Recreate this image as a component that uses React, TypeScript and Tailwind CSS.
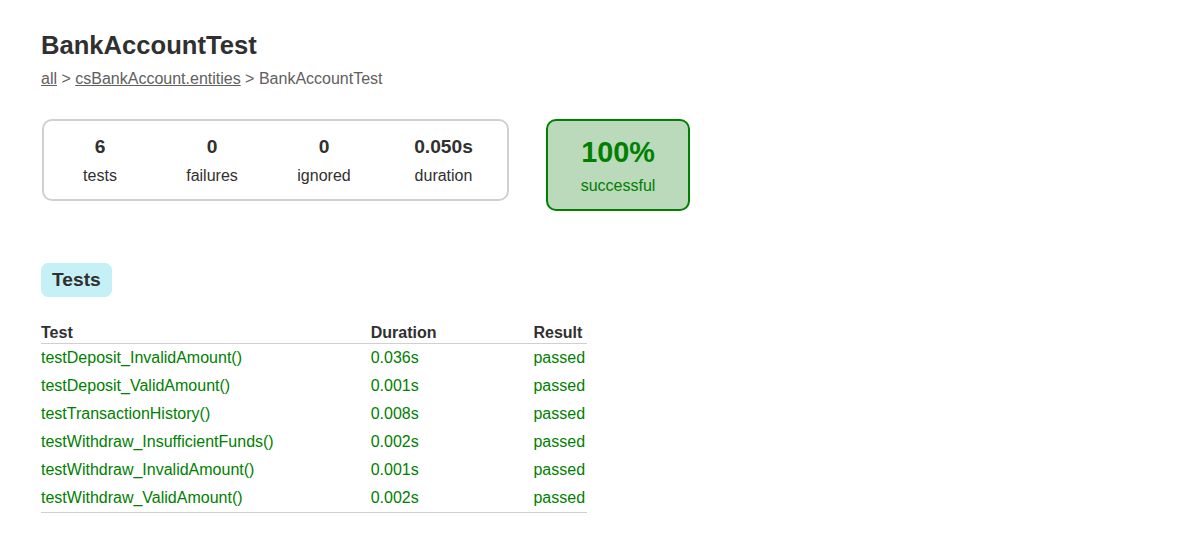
import React from "react";

const rows = [
  ["testDeposit_InvalidAmount()", "0.036s"],
  ["testDeposit_ValidAmount()", "0.001s"],
  ["testTransactionHistory()", "0.008s"],
  ["testWithdraw_InsufficientFunds()", "0.002s"],
  ["testWithdraw_InvalidAmount()", "0.001s"],
  ["testWithdraw_ValidAmount()", "0.002s"],
];

const counters = [
  { v: "6", l: "tests", w: "w-[112px]" },
  { v: "0", l: "failures", w: "w-[112px]" },
  { v: "0", l: "ignored", w: "w-[112px]" },
  { v: "0.050s", l: "duration", w: "w-[127px]" },
];

export default function App() {
  return (
    <div className="min-h-screen bg-white px-[41px] pt-[30px] font-['Liberation_Sans',Arial,sans-serif] text-[16px] text-[#303030]">
      <h1 className="m-0 mb-[10px] text-[25.6px] font-bold leading-[30px] whitespace-nowrap">
        BankAccountTest
      </h1>
      <div className="leading-[18px] text-[#606060]">
        <a href="#" className="underline text-[#606060]">all</a>
        {" > "}
        <a href="#" className="underline text-[#606060]">csBankAccount.entities</a>
        {" > BankAccountTest"}
      </div>

      <div className="mt-[31px] flex items-start">
        <div className="ml-[1px] flex rounded-[10px] border-2 border-[#d0d0d0]">
          {counters.map((c) => (
            <div key={c.l} className={`${c.w} pt-[15px] pb-[14px] text-center`}>
              <div className="mb-[9px] text-[19.2px] font-bold leading-[22px]">{c.v}</div>
              <div className="leading-[18px]">{c.l}</div>
            </div>
          ))}
        </div>
        <div className="ml-[37px] w-[144px] rounded-[10px] border-2 border-[#008000] bg-[#bbd9bb] pt-[15px] pb-[14px] text-center text-[#008000]">
          <div className="mb-[8px] text-[28.8px] font-bold leading-[33px]">100%</div>
          <div className="leading-[18px]">successful</div>
        </div>
      </div>

      <div className="mt-[52px] flex">
        <div className="rounded-[7px] border border-[#c5f0f5] bg-[#c5f0f5] px-[10px] py-[5px]">
          <span className="block text-[19.2px] font-bold leading-[22px] text-[#303030]">Tests</span>
        </div>
      </div>

      <table className="mt-[26px] border-collapse border-b border-[#d0d0d0]">
        <thead>
          <tr>
            <th className="border-b border-[#d0d0d0] py-[1px] pl-0 text-left font-bold leading-[18px] whitespace-nowrap">Test</th>
            <th className="border-b border-[#d0d0d0] py-[1px] pl-[97px] text-left font-bold leading-[18px] whitespace-nowrap">Duration</th>
            <th className="border-b border-[#d0d0d0] py-[1px] pl-[97px] pr-[2px] text-left font-bold leading-[18px] whitespace-nowrap">Result</th>
          </tr>
        </thead>
        <tbody className="text-[#008000]">
          {rows.map(([n, d]) => (
            <tr key={n}>
              <td className="py-[5px] pl-0 leading-[18px] whitespace-nowrap">{n}</td>
              <td className="py-[5px] pl-[97px] leading-[18px] whitespace-nowrap">{d}</td>
              <td className="py-[5px] pl-[97px] pr-[2px] leading-[18px] whitespace-nowrap">passed</td>
            </tr>
          ))}
        </tbody>
      </table>
    </div>
  );
}
